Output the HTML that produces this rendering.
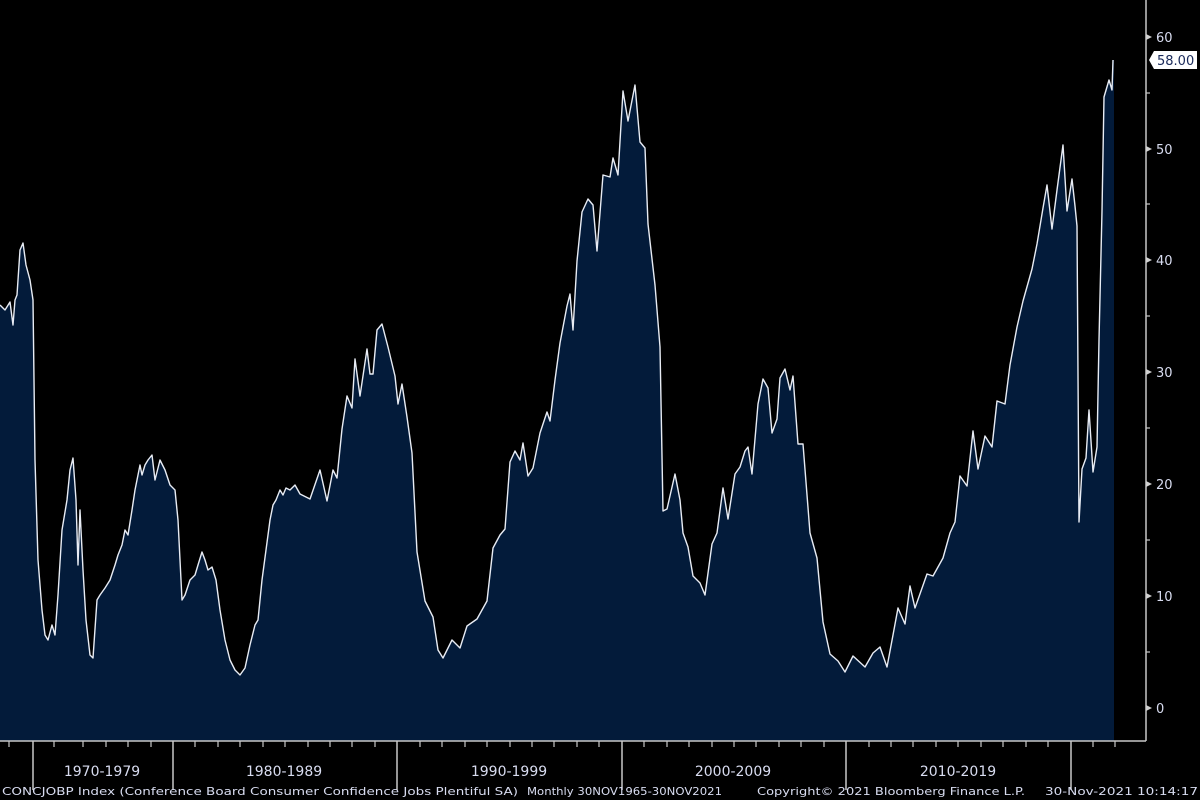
<!DOCTYPE html>
<html><head><meta charset="utf-8"><style>
html,body{margin:0;padding:0;background:#000;width:1200px;height:800px;overflow:hidden}
svg{display:block}
text{font-family:"DejaVu Sans","Liberation Sans",sans-serif;fill:#d8dcf0}
</style></head><body>
<svg width="1200" height="800" viewBox="0 0 1200 800">
<rect width="1200" height="800" fill="#000"/>
<g id="chart">
<path fill="#031b3a" stroke="none" d="M0,741 L0,305 L5,310 L10,302 L13,325 L15,300 L17,295 L20,250 L23,243 L26,265 L30,280 L33,300 L35,460 L38,560 L42,610 L45,635 L48,640 L52,625 L55,635 L58,595 L62,530 L67,500 L70,470 L73,458 L76,500 L78,565 L80,510 L83,570 L86,620 L90,655 L93,658 L97,600 L100,595 L105,588 L110,580 L115,565 L118,555 L122,545 L125,530 L128,535 L132,510 L135,490 L137,480 L140,465 L142,475 L145,465 L148,460 L152,455 L155,480 L160,460 L165,470 L170,485 L175,490 L178,520 L182,600 L185,595 L190,580 L195,575 L198,565 L202,552 L205,560 L208,570 L212,567 L216,580 L220,610 L225,640 L230,660 L235,670 L240,675 L245,668 L250,645 L255,625 L258,620 L262,580 L266,550 L270,520 L273,505 L276,500 L280,490 L283,495 L286,488 L290,490 L295,485 L300,494 L310,499 L320,470 L327,501 L333,470 L337,478 L342,429 L347,396 L352,408 L355,359 L360,396 L367,349 L370,374 L373,374 L377,330 L382,324 L388,347 L395,376 L398,404 L402,384 L407,417 L412,453 L417,552 L425,601 L433,617 L438,650 L443,658 L452,640 L460,648 L467,626 L477,619 L487,601 L493,548 L500,535 L505,529 L510,462 L515,451 L520,460 L523,443 L528,476 L533,468 L540,433 L547,412 L550,421 L555,380 L560,343 L567,306 L570,294 L573,330 L577,261 L582,212 L588,199 L593,205 L597,251 L603,175 L610,177 L613,158 L618,175 L623,91 L628,121 L635,85 L640,142 L645,148 L648,224 L655,285 L660,347 L663,511 L667,509 L675,474 L680,500 L683,533 L688,547 L693,576 L700,583 L705,595 L712,544 L717,533 L723,488 L728,519 L735,474 L740,467 L745,451 L748,447 L752,474 L758,404 L763,379 L768,388 L772,433 L777,419 L780,378 L785,369 L790,390 L793,376 L798,444 L803,444 L810,533 L817,558 L823,622 L830,654 L838,661 L845,672 L853,656 L865,667 L873,653 L880,647 L887,667 L893,635 L898,608 L905,624 L910,586 L915,608 L927,574 L933,576 L943,558 L950,533 L955,522 L960,476 L967,486 L973,431 L978,469 L985,436 L992,447 L997,401 L1005,404 L1010,365 L1017,327 L1023,301 L1032,269 L1037,244 L1043,208 L1047,185 L1052,229 L1057,190 L1063,145 L1067,211 L1072,179 L1075,206 L1077,226 L1079,522 L1082,469 L1086,458 L1089,410 L1093,472 L1097,447 L1099,340 L1102,211 L1104,97 L1109,80 L1112,90 L1113,60 L1114,60 L1114,741 Z"/>
<polyline fill="none" stroke="#e8ecf4" stroke-width="1.4" stroke-linejoin="round" points="0,305 5,310 10,302 13,325 15,300 17,295 20,250 23,243 26,265 30,280 33,300 35,460 38,560 42,610 45,635 48,640 52,625 55,635 58,595 62,530 67,500 70,470 73,458 76,500 78,565 80,510 83,570 86,620 90,655 93,658 97,600 100,595 105,588 110,580 115,565 118,555 122,545 125,530 128,535 132,510 135,490 137,480 140,465 142,475 145,465 148,460 152,455 155,480 160,460 165,470 170,485 175,490 178,520 182,600 185,595 190,580 195,575 198,565 202,552 205,560 208,570 212,567 216,580 220,610 225,640 230,660 235,670 240,675 245,668 250,645 255,625 258,620 262,580 266,550 270,520 273,505 276,500 280,490 283,495 286,488 290,490 295,485 300,494 310,499 320,470 327,501 333,470 337,478 342,429 347,396 352,408 355,359 360,396 367,349 370,374 373,374 377,330 382,324 388,347 395,376 398,404 402,384 407,417 412,453 417,552 425,601 433,617 438,650 443,658 452,640 460,648 467,626 477,619 487,601 493,548 500,535 505,529 510,462 515,451 520,460 523,443 528,476 533,468 540,433 547,412 550,421 555,380 560,343 567,306 570,294 573,330 577,261 582,212 588,199 593,205 597,251 603,175 610,177 613,158 618,175 623,91 628,121 635,85 640,142 645,148 648,224 655,285 660,347 663,511 667,509 675,474 680,500 683,533 688,547 693,576 700,583 705,595 712,544 717,533 723,488 728,519 735,474 740,467 745,451 748,447 752,474 758,404 763,379 768,388 772,433 777,419 780,378 785,369 790,390 793,376 798,444 803,444 810,533 817,558 823,622 830,654 838,661 845,672 853,656 865,667 873,653 880,647 887,667 893,635 898,608 905,624 910,586 915,608 927,574 933,576 943,558 950,533 955,522 960,476 967,486 973,431 978,469 985,436 992,447 997,401 1005,404 1010,365 1017,327 1023,301 1032,269 1037,244 1043,208 1047,185 1052,229 1057,190 1063,145 1067,211 1072,179 1075,206 1077,226 1079,522 1082,469 1086,458 1089,410 1093,472 1097,447 1099,340 1102,211 1104,97 1109,80 1112,90 1113,60"/>
</g>
<g stroke="#c8c8c8" stroke-width="1.5" fill="none">
<line x1="1146" y1="0" x2="1146" y2="741"/>
<line x1="0" y1="741" x2="1146" y2="741"/>
<line x1="33" y1="741" x2="33" y2="790"/>
<line x1="173" y1="741" x2="173" y2="790"/>
<line x1="397" y1="741" x2="397" y2="790"/>
<line x1="622" y1="741" x2="622" y2="790"/>
<line x1="846" y1="741" x2="846" y2="790"/>
<line x1="1071" y1="741" x2="1071" y2="790"/>
</g>
<g stroke="#c8c8c8" stroke-width="1.2">
<line x1="9" y1="741" x2="9" y2="747"/><line x1="54" y1="741" x2="54" y2="747"/><line x1="83" y1="741" x2="83" y2="747"/><line x1="106" y1="741" x2="106" y2="747"/><line x1="128" y1="741" x2="128" y2="747"/><line x1="151" y1="741" x2="151" y2="747"/>
<line x1="195" y1="741" x2="195" y2="747"/><line x1="218" y1="741" x2="218" y2="747"/><line x1="240" y1="741" x2="240" y2="747"/><line x1="263" y1="741" x2="263" y2="747"/><line x1="285" y1="741" x2="285" y2="747"/><line x1="308" y1="741" x2="308" y2="747"/><line x1="330" y1="741" x2="330" y2="747"/><line x1="352" y1="741" x2="352" y2="747"/><line x1="375" y1="741" x2="375" y2="747"/>
<line x1="420" y1="741" x2="420" y2="747"/><line x1="442" y1="741" x2="442" y2="747"/><line x1="465" y1="741" x2="465" y2="747"/><line x1="487" y1="741" x2="487" y2="747"/><line x1="510" y1="741" x2="510" y2="747"/><line x1="532" y1="741" x2="532" y2="747"/><line x1="554" y1="741" x2="554" y2="747"/><line x1="577" y1="741" x2="577" y2="747"/><line x1="599" y1="741" x2="599" y2="747"/>
<line x1="644" y1="741" x2="644" y2="747"/><line x1="667" y1="741" x2="667" y2="747"/><line x1="689" y1="741" x2="689" y2="747"/><line x1="712" y1="741" x2="712" y2="747"/><line x1="734" y1="741" x2="734" y2="747"/><line x1="756" y1="741" x2="756" y2="747"/><line x1="779" y1="741" x2="779" y2="747"/><line x1="801" y1="741" x2="801" y2="747"/><line x1="824" y1="741" x2="824" y2="747"/>
<line x1="869" y1="741" x2="869" y2="747"/><line x1="891" y1="741" x2="891" y2="747"/><line x1="913" y1="741" x2="913" y2="747"/><line x1="936" y1="741" x2="936" y2="747"/><line x1="958" y1="741" x2="958" y2="747"/><line x1="981" y1="741" x2="981" y2="747"/><line x1="1003" y1="741" x2="1003" y2="747"/><line x1="1026" y1="741" x2="1026" y2="747"/><line x1="1048" y1="741" x2="1048" y2="747"/>
<line x1="1093" y1="741" x2="1093" y2="747"/><line x1="1115" y1="741" x2="1115" y2="747"/>
<line x1="1146" y1="93" x2="1150" y2="93"/><line x1="1146" y1="204" x2="1150" y2="204"/><line x1="1146" y1="316" x2="1150" y2="316"/><line x1="1146" y1="428" x2="1150" y2="428"/><line x1="1146" y1="540" x2="1150" y2="540"/><line x1="1146" y1="652" x2="1150" y2="652"/>
</g>
<g fill="#d0d0d0">
<polygon points="1146,34 1152,37 1146,40"/><polygon points="1146,146 1152,149 1146,152"/><polygon points="1146,257 1152,260 1146,263"/><polygon points="1146,369 1152,372 1146,375"/><polygon points="1146,481 1152,484 1146,487"/><polygon points="1146,593 1152,596 1146,599"/><polygon points="1146,705 1152,708 1146,711"/>
</g>
<g font-size="13">
<text x="1156" y="42">60</text><text x="1156" y="154">50</text><text x="1156" y="265">40</text><text x="1156" y="377">30</text><text x="1156" y="489">20</text><text x="1156" y="601">10</text><text x="1156" y="713">0</text>
</g>
<path d="M1149,60 L1154,51 L1197,51 L1197,69 L1154,69 Z" fill="#fff"/>
<text x="1157" y="65" font-size="13" style="fill:#1a2a5a">58.00</text>
<g font-size="14" font-family="Liberation Serif" text-anchor="middle">
<text x="102" y="776">1970-1979</text><text x="284" y="776">1980-1989</text><text x="509" y="776">1990-1999</text><text x="733" y="776">2000-2009</text><text x="958" y="776">2010-2019</text>
</g>
<g font-size="11">
<text x="2" y="795" textLength="516" lengthAdjust="spacingAndGlyphs">CONCJOBP Index (Conference Board Consumer Confidence Jobs Plentiful SA)</text>
<text x="527" y="795" textLength="195" lengthAdjust="spacingAndGlyphs">Monthly 30NOV1965-30NOV2021</text>
<text x="757" y="795" textLength="268" lengthAdjust="spacingAndGlyphs">Copyright© 2021 Bloomberg Finance L.P.</text>
<text x="1045" y="795" textLength="153" lengthAdjust="spacingAndGlyphs">30-Nov-2021 10:14:17</text>
</g>
</svg>
</body></html>
